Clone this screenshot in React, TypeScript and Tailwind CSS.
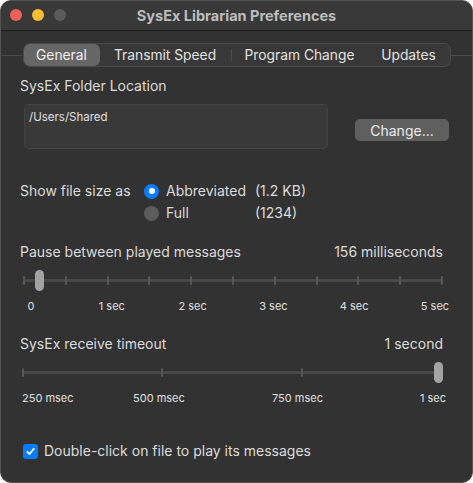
import React from 'react'

const font = { fontFamily: 'Inter, "Liberation Sans", sans-serif' }

const tabs = [
  { label: 'General', w: 'w-[76px]' },
  { label: 'Transmit Speed', w: 'w-[131px]' },
  { label: 'Program Change', w: 'w-[136px]' },
  { label: 'Updates', w: 'w-[82px]' },
]

function Slider({ ticks, knob }: { ticks: number; knob: number }) {
  return (
    <div className="relative h-[21px] w-[420px]">
      <div className="absolute left-0 right-0 top-[9px] h-[3px] rounded-full bg-[#474747]" />
      <div className="absolute inset-x-0 top-[6px] flex justify-between">
        {Array.from({ length: ticks }).map((_, i) => (
          <div key={i} className="h-[9px] w-[2px] rounded-[1px] bg-[#575757]" />
        ))}
      </div>
      <div
        className="absolute top-0 h-[21px] w-[9px] rounded-full bg-[#a3a3a3]"
        style={{ left: knob - 4.5 }}
      />
    </div>
  )
}

function Radio({ on }: { on?: boolean }) {
  return on ? (
    <div className="flex h-[15px] w-[15px] items-center justify-center rounded-full bg-[#0a7cf5]">
      <div className="h-[6px] w-[6px] rounded-full bg-white" />
    </div>
  ) : (
    <div className="h-[15px] w-[15px] rounded-full bg-[#5c5c5c]" />
  )
}

export default function App() {
  return (
    <div className="h-[483px] w-[473px] bg-white" style={font}>
      <div className="flex h-full w-full flex-col overflow-hidden rounded-[11px] border border-[#545454] bg-[#323232] text-[14px] text-[#dcdcdc]">
        {/* title bar */}
        <div className="relative flex h-[30px] shrink-0 items-center justify-center border-b border-[#1c1c1c] bg-[#393939]">
          <div className="absolute left-[9px] top-[8px] flex gap-[10px]">
            <div className="h-[12px] w-[12px] rounded-full bg-[#ee5f57]" />
            <div className="h-[12px] w-[12px] rounded-full bg-[#f6bd32]" />
            <div className="h-[12px] w-[12px] rounded-full bg-[#5a5a5a]" />
          </div>
          <span className="text-[14.5px] font-bold text-[#bdbdbd]">SysEx Librarian Preferences</span>
        </div>

        {/* tabs */}
        <div className="mt-[12px] flex items-center">
          <div className="h-px flex-1 bg-[#4a4a4a]" />
          <div className="flex h-[24px] items-center rounded-[7px] border border-[#4a4a4a] bg-[#383838] text-[13.8px] text-[#e2e2e2]">
            {tabs.map((t, i) => (
              <React.Fragment key={t.label}>
                {i === 2 && <div className="h-[12px] w-px bg-[#4c4c4c]" />}
                <div
                  className={`${t.w} flex h-full items-center justify-center ${
                    i === 0 ? 'rounded-[6px] bg-[#666666] text-[#f0f0f0]' : ''
                  }`}
                >
                  {t.label}
                </div>
              </React.Fragment>
            ))}
          </div>
          <div className="h-px flex-1 bg-[#4a4a4a]" />
        </div>

        <div className="flex flex-col pl-[19px] pr-[22px]">
          <div className="mt-[11px] leading-[16px]">SysEx Folder Location</div>
          <div className="mt-[10px] flex items-start">
            <div className="ml-[4px] h-[45px] w-[304px] shrink-0 rounded-[5px] border border-[#444444] bg-[#393939] px-[4px] pt-[5px] text-[11.5px] leading-[14px] text-[#e0e0e0]">
              /Users/Shared
            </div>
            <div className="ml-[27px] mt-[15px] flex h-[22px] w-[94px] shrink-0 items-center justify-center rounded-[5px] bg-[#5f5f5f] text-[14px] text-[#ececec]">
              Change...
            </div>
          </div>

          {/* file size */}
          <div className="mt-[34px] grid grid-cols-[124px_22px_89px_1fr] items-center gap-y-[6px] leading-[16px]">
            <span>Show file size as</span>
            <Radio on />
            <span>Abbreviated</span>
            <span>(1.2 KB)</span>
            <span />
            <Radio />
            <span>Full</span>
            <span>(1234)</span>
          </div>

          {/* pause slider */}
          <div className="mr-[7px] mt-[23px] flex justify-between leading-[16px]">
            <span>Pause between played messages</span>
            <span>156 milliseconds</span>
          </div>
          <div className="ml-[3px] mt-[10px]">
            <Slider ticks={11} knob={16} />
          </div>
          <div className="ml-[11px] mt-[8px] flex w-[404px] justify-between text-[11px] leading-[14px] text-[#e0e0e0]">
            {['0', '1 sec', '2 sec', '3 sec', '4 sec', '5 sec'].map((l) => (
              <span key={l} className="flex w-0 justify-center whitespace-nowrap">
                {l}
              </span>
            ))}
          </div>

          {/* timeout slider */}
          <div className="mr-[7px] mt-[23px] flex justify-between leading-[16px]">
            <span>SysEx receive timeout</span>
            <span>1 second</span>
          </div>
          <div className="ml-[2px] mt-[10px]">
            <Slider ticks={4} knob={416} />
          </div>
          <div className="mt-[8px] grid grid-cols-[113px_139px_148px_1fr] whitespace-nowrap text-[11px] leading-[14px] text-[#e0e0e0]">
            <span className="pl-[2px]">250 msec</span>
            <span>500 msec</span>
            <span>750 msec</span>
            <span>1 sec</span>
          </div>

          {/* checkbox */}
          <div className="mt-[38px] flex items-center gap-[6px] leading-[16px]">
            <div className="ml-[3px] flex h-[15px] w-[15px] items-center justify-center rounded-[3px] bg-[#0a7cf5]">
              <svg viewBox="0 0 12 12" className="h-[11px] w-[11px]">
                <path d="M2.5 6.3 L5 8.8 L9.6 3" fill="none" stroke="white" strokeWidth="1.9" strokeLinecap="round" strokeLinejoin="round" />
              </svg>
            </div>
            <span className="text-[14px]">Double-click on file to play its messages</span>
          </div>
        </div>
      </div>
    </div>
  )
}
